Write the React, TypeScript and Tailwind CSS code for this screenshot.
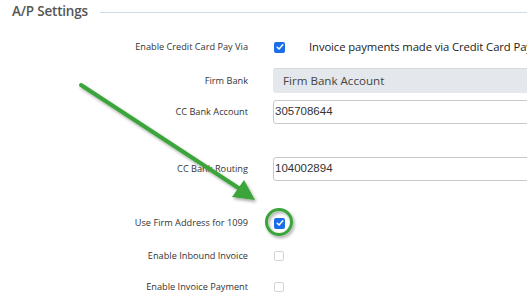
import React from 'react';

const labelCls = "w-[248px] shrink-0 text-right text-[9.2px] text-[#333]";

function Checked() {
  return (
    <span className="w-[11px] h-[11px] rounded-[2px] bg-[#1a6fe8] flex items-center justify-center">
      <svg width="8" height="8" viewBox="0 0 8 8" fill="none">
        <path d="M1.2 4.2 L3.1 6 L6.8 1.8" stroke="white" strokeWidth="1.5" strokeLinecap="round" strokeLinejoin="round" />
      </svg>
    </span>
  );
}

function Unchecked() {
  return <span className="w-[10px] h-[10px] rounded-[2px] border border-[#d4d4d4] bg-white block" />;
}

export default function App() {
  return (
    <div className="relative w-[527px] h-[303px] overflow-hidden bg-white" style={{ fontFamily: '"Open Sans", "Noto Sans", sans-serif' }}>
      {/* section header */}
      <div className="flex items-center pl-3 pt-[2px] h-[22px]">
        <h2 className="text-[13.5px] font-semibold text-[#555] leading-none tracking-[-0.2px]">A/P Settings</h2>
        <div className="ml-[12px] flex-1 h-px bg-[#cfdbea]" />
      </div>

      <div className="flex flex-col">
        <div className="flex items-center h-[22px] mt-[14px]">
          <div className={labelCls}>Enable Credit Card Pay Via</div>
          <div className="ml-[26px] flex items-center">
            <Checked />
            <span className="ml-[24px] text-[11.3px] text-[#222] whitespace-nowrap tracking-[-0.1px]">Invoice payments made via Credit Card Pay</span>
          </div>
        </div>

        <div className="flex items-center h-[25px] mt-[10px]">
          <div className={labelCls}>Firm Bank</div>
          <div className="ml-[25px] w-[320px] shrink-0 h-[25px] rounded-[3px] bg-[#e4e7eb] border-t border-[#d6d9dd] flex items-center pl-[10px] text-[11.6px] text-[#444]">
            Firm Bank Account
          </div>
        </div>

        <div className="flex items-center h-[24px] mt-[7px]">
          <div className={labelCls}>CC Bank Account</div>
          <div className="ml-[25px] w-[320px] shrink-0 h-[24px] rounded-[3px] border border-[#c8c8c8] bg-white flex items-center pl-[1px] text-[11.5px] text-[#333]" style={{ fontFamily: '"Liberation Sans", Arial, sans-serif' }}>
            305708644
          </div>
        </div>

        <div className="flex items-center h-[24px] mt-[33px]">
          <div className={labelCls}>CC Bank Routing</div>
          <div className="ml-[25px] w-[320px] shrink-0 h-[24px] rounded-[3px] border border-[#c8c8c8] bg-white flex items-center pl-[1px] text-[11.5px] text-[#333]" style={{ fontFamily: '"Liberation Sans", Arial, sans-serif' }}>
            104002894
          </div>
        </div>

        <div className="flex items-center h-[20px] mt-[32px]">
          <div className={labelCls}>Use Firm Address for 1099</div>
          <div className="ml-[26px]"><Checked /></div>
        </div>

        <div className="flex items-center h-[20px] mt-[13px]">
          <div className={labelCls}>Enable Inbound Invoice</div>
          <div className="ml-[26px]"><Unchecked /></div>
        </div>

        <div className="flex items-center h-[20px] mt-[11px]">
          <div className={labelCls}>Enable Invoice Payment</div>
          <div className="ml-[26px]"><Unchecked /></div>
        </div>
      </div>

      {/* annotation overlay */}
      <svg className="absolute inset-0 pointer-events-none" width="527" height="303">
        <defs>
          <filter id="sh" x="-20%" y="-20%" width="140%" height="140%">
            <feDropShadow dx="1.5" dy="2" stdDeviation="1.5" floodColor="#000" floodOpacity="0.35" />
          </filter>
        </defs>
        <g filter="url(#sh)">
          <line x1="81" y1="85" x2="240" y2="189" stroke="#3aa53a" strokeWidth="4" strokeLinecap="round" />
          <polygon points="255,200 232,197 244,180" fill="#3aa53a" />
          <circle cx="279" cy="222" r="12.5" fill="none" stroke="#3aa53a" strokeWidth="3" />
        </g>
      </svg>
    </div>
  );
}
